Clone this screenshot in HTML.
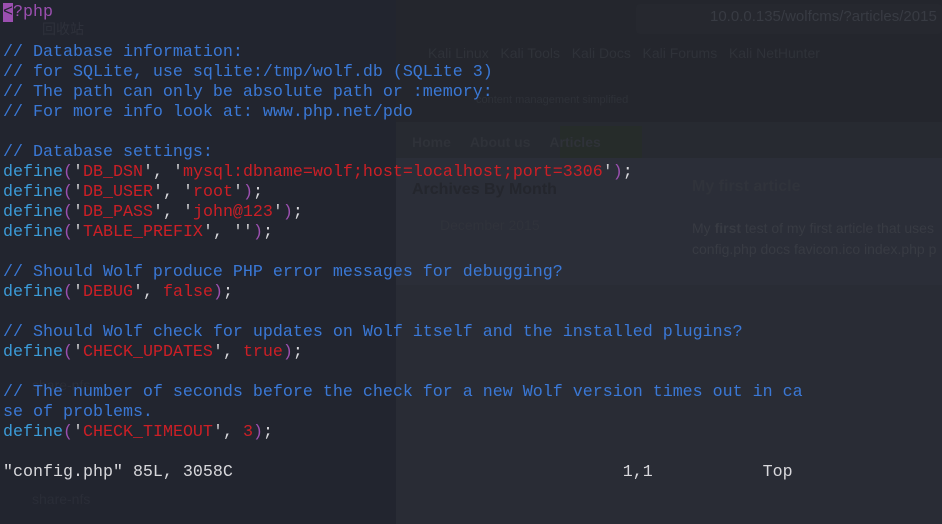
<!DOCTYPE html>
<html><head><meta charset="utf-8"><style>
html,body{margin:0;padding:0;width:942px;height:524px;overflow:hidden;background:#22252f;}
.bg{position:absolute;}
pre{position:absolute;left:3px;top:3px;margin:0;font-family:"Liberation Mono",monospace;font-size:16.67px;line-height:20px;color:#d8d8dc;}
.c{color:#3a78d6}.d{color:#3b9bd8}.s{color:#cc1f26}.p{color:#9b4fb0}.q{color:#c8c8cc}
.lt{background:#9b4fb0;color:#22252f}
.ph{color:#9b4fb0}
.g{position:absolute;font-family:"Liberation Sans",sans-serif;color:#32353d;}
</style></head><body>
<div class="bg" style="left:396px;top:0;width:546px;height:122px;background:#24262d"></div>
<div class="bg" style="left:396px;top:122px;width:546px;height:36px;background:#272a31"></div>
<div class="bg" style="left:560px;top:126px;width:82px;height:32px;background:#262c2a"></div>
<div class="bg" style="left:396px;top:158px;width:546px;height:127px;background:#2b2e38"></div>
<div class="bg" style="left:396px;top:285px;width:546px;height:239px;background:#292c35"></div>
<div class="bg" style="left:636px;top:4px;width:306px;height:30px;background:#26282f;border-radius:4px"></div>
<div class="g" style="left:710px;top:8px;font-size:15px;color:#383b43">10.0.0.135/wolfcms/?articles/2015</div>
<div class="g" style="left:428px;top:45px;font-size:14px;color:#2f3239">Kali Linux &nbsp; Kali Tools &nbsp; Kali Docs &nbsp; Kali Forums &nbsp; Kali NetHunter</div>
<div class="g" style="left:476px;top:94px;font-size:11px;color:#2e3138">content management simplified</div>
<div class="g" style="left:412px;top:134px;font-size:14px;font-weight:bold;color:#2f3239">Home &nbsp; &nbsp; About us &nbsp; &nbsp; Articles</div>
<div class="g" style="left:412px;top:181px;font-size:16px;font-weight:bold;color:#24262d">Archives By Month</div>
<div class="g" style="left:692px;top:178px;font-size:16px;font-weight:bold;color:#30333b">My first article</div>
<div class="g" style="left:440px;top:217px;font-size:14px;color:#30333b">December 2015</div>
<div class="g" style="left:692px;top:220px;font-size:14px;color:#383b43">My <b>first</b> test of my first article that uses</div>
<div class="g" style="left:692px;top:241px;font-size:14px;color:#383b43">config.php docs favicon.ico index.php p</div>
<div class="g" style="left:42px;top:19px;font-size:14px;color:#2e313b">回收站</div>
<div class="g" style="left:32px;top:377px;font-size:14px;color:#2a2d37">share-nfs</div>
<div class="g" style="left:32px;top:491px;font-size:14px;color:#2a2d37">share-nfs</div>
<pre><span class="lt">&lt;</span><span class="ph">?php</span>

<span class="c">// Database information:</span>
<span class="c">// for SQLite, use sqlite:/tmp/wolf.db (SQLite 3)</span>
<span class="c">// The path can only be absolute path or :memory:</span>
<span class="c">// For more info look at: www.php.net/pdo</span>

<span class="c">// Database settings:</span>
<span class="d">define</span><span class="p">(</span><span class="q">'</span><span class="s">DB_DSN</span><span class="q">'</span>, <span class="q">'</span><span class="s">mysql:dbname=wolf;host=localhost;port=3306</span><span class="q">'</span><span class="p">)</span>;
<span class="d">define</span><span class="p">(</span><span class="q">'</span><span class="s">DB_USER</span><span class="q">'</span>, <span class="q">'</span><span class="s">root</span><span class="q">'</span><span class="p">)</span>;
<span class="d">define</span><span class="p">(</span><span class="q">'</span><span class="s">DB_PASS</span><span class="q">'</span>, <span class="q">'</span><span class="s">john@123</span><span class="q">'</span><span class="p">)</span>;
<span class="d">define</span><span class="p">(</span><span class="q">'</span><span class="s">TABLE_PREFIX</span><span class="q">'</span>, <span class="q">''</span><span class="p">)</span>;

<span class="c">// Should Wolf produce PHP error messages for debugging?</span>
<span class="d">define</span><span class="p">(</span><span class="q">'</span><span class="s">DEBUG</span><span class="q">'</span>, <span class="s">false</span><span class="p">)</span>;

<span class="c">// Should Wolf check for updates on Wolf itself and the installed plugins?</span>
<span class="d">define</span><span class="p">(</span><span class="q">'</span><span class="s">CHECK_UPDATES</span><span class="q">'</span>, <span class="s">true</span><span class="p">)</span>;

<span class="c">// The number of seconds before the check for a new Wolf version times out in ca</span>
<span class="c">se of problems.</span>
<span class="d">define</span><span class="p">(</span><span class="q">'</span><span class="s">CHECK_TIMEOUT</span><span class="q">'</span>, <span class="s">3</span><span class="p">)</span>;

"config.php" 85L, 3058C                                       1,1           Top</pre>
</body></html>
